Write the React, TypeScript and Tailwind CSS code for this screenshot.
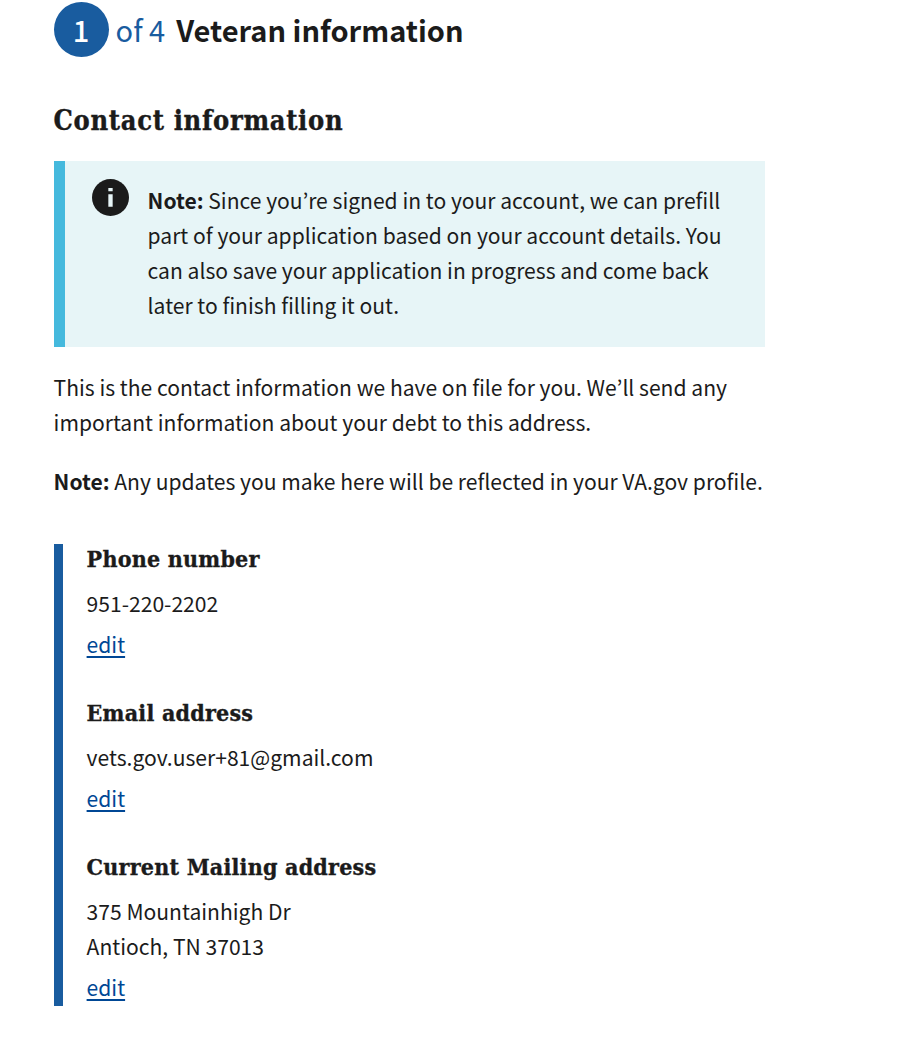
import React from "react";

const sans = "font-['Noto_Sans_CJK_KR','Noto_Sans_CJK_SC',sans-serif]";
const slab = "font-['DejaVu_Serif_Condensed','DejaVu_Serif',serif] font-bold [-webkit-text-stroke:0.35px_#1b1b1b]";

type Entry = { title: string; lines: string[] };

const entries: Entry[] = [
  { title: "Phone number", lines: ["951-220-2202"] },
  { title: "Email address", lines: ["vets.gov.user+81@gmail.com"] },
  { title: "Current Mailing address", lines: ["375 Mountainhigh Dr", "Antioch, TN 37013"] },
];

function ContactEntry({ title, lines }: Entry) {
  return (
    <section>
      <h3 className={`${slab} whitespace-nowrap text-[23px] leading-[30px] tracking-[0.22px]`}>{title}</h3>
      <div className="mt-[12px]">
        {lines.map((l) => (
          <p key={l} className="whitespace-nowrap">{l}</p>
        ))}
      </div>
      <a href="#" className="mt-[6px] block w-fit text-[#004795] underline decoration-[1.5px] underline-offset-[3px]">
        edit
      </a>
    </section>
  );
}

export default function App() {
  return (
    <main className={`${sans} h-[1054px] w-[900px] overflow-hidden bg-white pl-[53.6px] pt-[2px] text-[21.08px] leading-[35.3px] text-[#1b1b1b]`}>
      <h2 className="flex h-[55px] items-center whitespace-nowrap text-[29px] leading-[52px]">
        <span className="flex size-[55px] items-center justify-center rounded-full bg-[#195c9f] pb-[2px] font-medium text-white">1</span>
        <span className="ml-[7px] pb-[2px] text-[#195c9f]">of 4</span>
        <span className="ml-[11px] pb-[2px] font-bold">Veteran information</span>
      </h2>
      <h2 className={`${slab} mt-[46px] whitespace-nowrap text-[27px] leading-[36px] tracking-[0.68px]`}>Contact information</h2>
      <div className="mt-[22px] flex h-[186px] w-[711px] border-l-[11px] border-[#45b9dd] bg-[#e7f5f7] pl-[27px] pt-[18px]">
        <svg className="size-[37px] shrink-0" viewBox="0 0 24 24">
          <circle cx="12" cy="12" r="12" fill="#1b1b1b" />
          <path d="M10.6 5.8h2.8V8h-2.8zM10.6 9.9h2.8V18h-2.8z" fill="#e7f5f7" />
        </svg>
        <p className="ml-[19px] mt-[3.6px] whitespace-nowrap">
          <b>Note:</b> Since you’re signed in to your account, we can prefill<br />
          part of your application based on your account details. You<br />
          can also save your application in progress and come back<br />
          later to finish filling it out.
        </p>
      </div>
      <p className="mt-[23px] whitespace-nowrap">
        This is the contact information we have on file for you. We’ll send any<br />
        important information about your debt to this address.
      </p>
      <p className="mt-[23px] whitespace-nowrap">
        <b>Note:</b> Any updates you make here will be reflected in your VA.gov profile.
      </p>
      <div className="mt-[45px] flex h-[462px] w-[711px] flex-col gap-[35.4px] border-l-[9px] border-[#195c9f] pl-[24px]">
        {entries.map((e) => (
          <ContactEntry key={e.title} {...e} />
        ))}
      </div>
    </main>
  );
}
